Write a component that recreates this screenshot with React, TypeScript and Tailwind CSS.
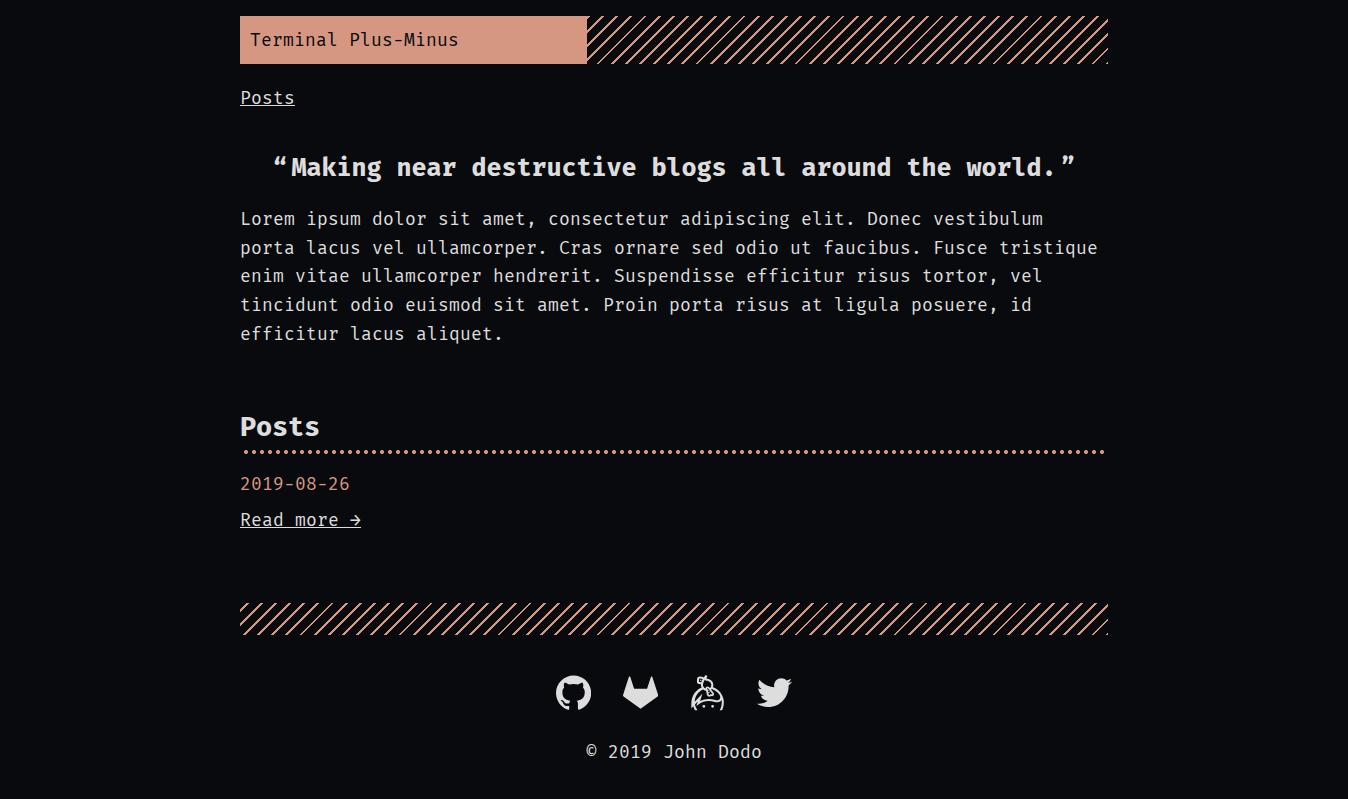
import { SiGithub, SiKeybase } from "react-icons/si";

const stripes =
  "bg-[repeating-linear-gradient(-45deg,#d69782,#d69782_2px,transparent_0,transparent_10px)]";

const paragraph = [
  "Lorem ipsum dolor sit amet, consectetur adipiscing elit. Donec vestibulum",
  "porta lacus vel ullamcorper. Cras ornare sed odio ut faucibus. Fusce tristique",
  "enim vitae ullamcorper hendrerit. Suspendisse efficitur risus tortor, vel",
  "tincidunt odio euismod sit amet. Proin porta risus at ligula posuere, id",
  "efficitur lacus aliquet.",
].join(" ");

function Gitlab() {
  return (
    <svg viewBox="0 0 24 24" className="size-[35.2px]" fill="currentColor">
      <path d="M23.955 13.587l-1.342-4.135-2.664-8.189a.455.455 0 0 0-.867 0L16.418 9.45H7.582L4.919 1.263C4.783.84 4.185.84 4.05 1.26L1.386 9.449.044 13.587a.924.924 0 0 0 .331 1.023L12 23.054l11.625-8.443a.92.92 0 0 0 .33-1.024" />
    </svg>
  );
}

function Twitter() {
  return (
    <svg viewBox="0 0 24 24" className="size-[35.2px]" fill="currentColor">
      <path d="M23.954 4.569c-.885.389-1.83.654-2.825.775 1.014-.611 1.794-1.574 2.163-2.723-.951.555-2.005.959-3.127 1.184-.896-.959-2.173-1.559-3.591-1.559-2.717 0-4.92 2.203-4.92 4.917 0 .39.045.765.127 1.124C7.691 8.094 4.066 6.13 1.64 3.161c-.427.722-.666 1.561-.666 2.475 0 1.71.87 3.213 2.188 4.096-.807-.026-1.566-.248-2.228-.616v.061c0 2.385 1.693 4.374 3.946 4.827-.413.111-.849.171-1.296.171-.314 0-.615-.03-.916-.086.631 1.953 2.445 3.377 4.604 3.417-1.68 1.319-3.809 2.105-6.102 2.105-.39 0-.779-.023-1.17-.067 2.189 1.394 4.768 2.209 7.557 2.209 9.054 0 13.999-7.496 13.999-13.986 0-.209 0-.42-.015-.63.961-.689 1.8-1.56 2.46-2.548l-.047-.02z" />
    </svg>
  );
}

export default function App() {
  return (
    <div className="h-[799px] overflow-hidden bg-[#090a0d] font-['Fira_Mono','DejaVu_Sans_Mono',monospace] text-[18px] leading-[28.8px] tracking-[0.2px] text-[#dddddd]">
      <div className="mx-auto flex w-[868px] flex-col pt-4">
        <header className="flex h-12">
          <a href="#" className="flex w-[347px] items-center bg-[#d69782] px-[10px] text-[#090a0d]">
            Terminal Plus-Minus
          </a>
          <div className={`flex-1 ${stripes}`} />
        </header>

        <nav className="mt-5 h-[29px]">
          <a href="#" className="underline decoration-1 underline-offset-[1px]">Posts</a>
        </nav>

        <main>
          <h1 className="mt-[35px] flex h-10 items-center justify-center whitespace-nowrap text-[25.2px] font-bold tracking-[-0.11px]">
            <span className="-ml-1 mr-1">“</span>
            <span>Making near destructive blogs all around the world.</span>
            <span className="-mr-1 ml-1">”</span>
          </h1>
          <p className="mt-[17px] h-36 leading-[28.7px]">{paragraph}</p>

          <section className="mt-[58px]">
            <h2 className="h-[43px] text-[27px] font-bold leading-[41px] tracking-[-0.2px]">Posts</h2>
            <div className="mx-1 h-1 bg-[radial-gradient(circle_at_2px_2px,#d69782_1.7px,transparent_2.3px)] bg-[length:8px_4px]" />
            <time className="mt-4 block h-[29px] text-[#d69782]">2019-08-26</time>
            <div className="mt-[7px] h-[29px]">
              <a href="#" className="underline decoration-1 underline-offset-[1px]">Read more →</a>
            </div>
          </section>
        </main>

        <footer className="mt-[68px]">
          <div className={`h-8 ${stripes}`} />
          <div className="mt-10 flex h-[36px] items-center justify-center gap-8">
            <a href="#" aria-label="GitHub"><SiGithub className="size-[35.2px]" /></a>
            <a href="#" aria-label="GitLab"><Gitlab /></a>
            <a href="#" aria-label="Keybase"><SiKeybase className="size-[35.2px]" /></a>
            <a href="#" aria-label="Twitter"><Twitter /></a>
          </div>
          <p className="mt-[27px] text-center">© 2019 John Dodo</p>
        </footer>
      </div>
    </div>
  );
}
